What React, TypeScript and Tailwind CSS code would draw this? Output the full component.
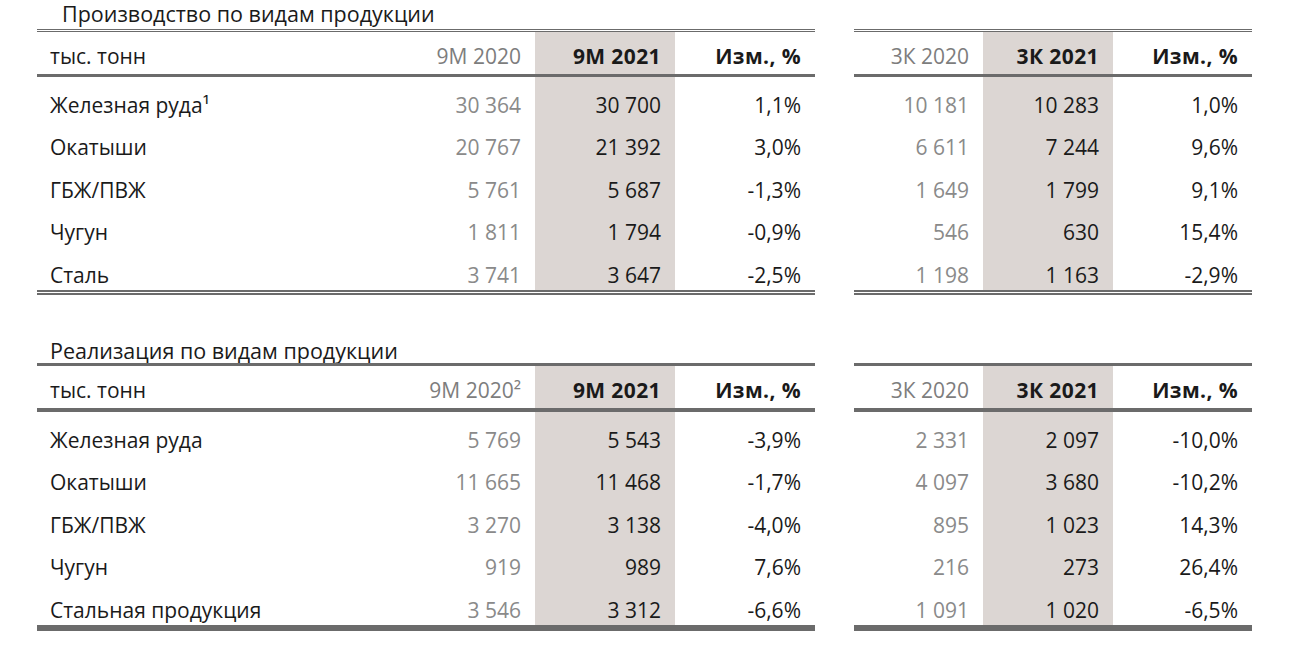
const font = { fontFamily: '"Open Sans", "Noto Sans", sans-serif' };

type Row = { label: string; a: string; b: string; c: string; qa: string; qb: string; qc: string };

const production: Row[] = [
  { label: "Железная руда¹", a: "30 364", b: "30 700", c: "1,1%", qa: "10 181", qb: "10 283", qc: "1,0%" },
  { label: "Окатыши", a: "20 767", b: "21 392", c: "3,0%", qa: "6 611", qb: "7 244", qc: "9,6%" },
  { label: "ГБЖ/ПВЖ", a: "5 761", b: "5 687", c: "-1,3%", qa: "1 649", qb: "1 799", qc: "9,1%" },
  { label: "Чугун", a: "1 811", b: "1 794", c: "-0,9%", qa: "546", qb: "630", qc: "15,4%" },
  { label: "Сталь", a: "3 741", b: "3 647", c: "-2,5%", qa: "1 198", qb: "1 163", qc: "-2,9%" },
];

const sales: Row[] = [
  { label: "Железная руда", a: "5 769", b: "5 543", c: "-3,9%", qa: "2 331", qb: "2 097", qc: "-10,0%" },
  { label: "Окатыши", a: "11 665", b: "11 468", c: "-1,7%", qa: "4 097", qb: "3 680", qc: "-10,2%" },
  { label: "ГБЖ/ПВЖ", a: "3 270", b: "3 138", c: "-4,0%", qa: "895", qb: "1 023", qc: "14,3%" },
  { label: "Чугун", a: "919", b: "989", c: "7,6%", qa: "216", qb: "273", qc: "26,4%" },
  { label: "Стальная продукция", a: "3 546", b: "3 312", c: "-6,6%", qa: "1 091", qb: "1 020", qc: "-6,5%" },
];

const cell = "flex items-end justify-end pb-[1px] pr-[14px] leading-[28px]";
const head = "flex items-end justify-end pb-[4px] pr-[14px] leading-[28px]";
const bold = "font-bold tracking-[0.4px] text-[#1a1a1a]";
const shade = "bg-[#dcd6d3]";

function Section({
  title,
  titleBox,
  prev,
  rows,
  headBox,
  bottom,
}: {
  title: string;
  titleBox: string;
  prev: string;
  rows: Row[];
  headBox: string;
  bottom: string;
}) {
  return (
    <div>
      <div className={`text-[21.5px] font-medium leading-[28px] text-[#1a1a1a] ${titleBox}`}>{title}</div>
      <div className="flex gap-[39px] pl-[37px]">
        {/* 9M table */}
        <div className={`w-[778px] border-t-[3px] border-[#6b6b6b] ${bottom}`}>
          <div className={`grid grid-cols-[358px_140px_140px_140px] border-[#6b6b6b] text-[21px] ${headBox}`}>
            <div className="flex items-end pb-[4px] pl-[13px] leading-[28px] text-[#1a1a1a]">тыс. тонн</div>
            <div className={`${head} text-[#7d7d7d]`}>{prev}</div>
            <div className={`${head} ${shade} ${bold}`}>9М 2021</div>
            <div className={`${head} ${bold}`}>Изм., %</div>
          </div>
          {rows.map((r) => (
            <div key={r.label} className="grid h-[42.6px] grid-cols-[358px_140px_140px_140px] text-[21px]">
              <div className="flex items-end pb-[1px] pl-[13px] leading-[28px] text-[#1a1a1a]">{r.label}</div>
              <div className={`${cell} text-[#8a8a8a]`}>{r.a}</div>
              <div className={`${cell} ${shade} text-[#1a1a1a]`}>{r.b}</div>
              <div className={`${cell} text-[#1a1a1a]`}>{r.c}</div>
            </div>
          ))}
        </div>

        {/* 3K table */}
        <div className={`w-[398px] border-t-[3px] border-[#6b6b6b] ${bottom}`}>
          <div className={`grid grid-cols-[129px_130px_139px] border-[#6b6b6b] text-[21px] ${headBox}`}>
            <div className={`${head} text-[#7d7d7d]`}>3К 2020</div>
            <div className={`${head} ${shade} ${bold}`}>3К 2021</div>
            <div className={`${head} ${bold}`}>Изм., %</div>
          </div>
          {rows.map((r) => (
            <div key={r.label} className="grid h-[42.6px] grid-cols-[129px_130px_139px] text-[21px]">
              <div className={`${cell} text-[#8a8a8a]`}>{r.qa}</div>
              <div className={`${cell} ${shade} text-[#1a1a1a]`}>{r.qb}</div>
              <div className={`${cell} text-[#1a1a1a]`}>{r.qc}</div>
            </div>
          ))}
        </div>
      </div>
    </div>
  );
}

export default function App() {
  return (
    <div className="h-[646px] w-[1296px] bg-white" style={font}>
      <Section
        title="Производство по видам продукции"
        titleBox="h-[29px] pl-[62px]"
        prev="9М 2020"
        rows={production}
        headBox="h-[45px] border-b-[3px]"
        bottom="border-b-[5px] border-double"
      />
      <div className="h-[42px]" />
      <Section
        title="Реализация по видам продукции"
        titleBox="h-[26px] pl-[50px]"
        prev="9М 2020²"
        rows={sales}
        headBox="h-[46px] border-b-[4px]"
        bottom="border-b-[6px]"
      />
    </div>
  );
}
